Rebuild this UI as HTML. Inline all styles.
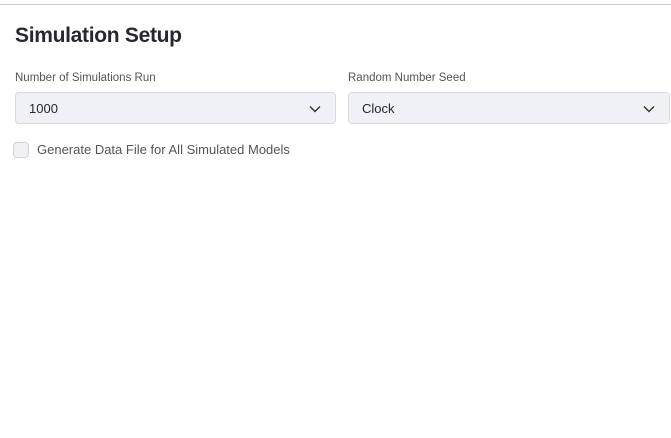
<!DOCTYPE html>
<html><head><style>
body{margin:0;width:671px;height:438px;background:#fff;font-family:"Liberation Sans",sans-serif;position:relative;overflow:hidden}
.top{position:absolute;left:0;top:4px;width:671px;height:1px;background:#cfcbea}
h1{position:absolute;left:15px;top:24px;margin:0;font-size:21px;font-weight:bold;color:#262730;letter-spacing:-0.3px}
.lbl{position:absolute;top:72px;font-size:11.5px;color:#555}
.sel{position:absolute;top:92px;height:32px;border:1px solid #dadbe0;border-radius:4px;background:#f0f1f4;box-sizing:border-box}
.sel span{position:absolute;left:13px;top:8px;font-size:13px;color:#262730}
.sel svg{position:absolute;right:14px;top:12px}
.cb{position:absolute;left:13px;top:142px;width:16px;height:16px;border:1px solid #d2d3d8;border-radius:4px;background:#f0f1f4;box-sizing:border-box}
.cbl{position:absolute;left:37px;top:142px;font-size:13px;color:#555}
</style></head><body>
<div class="top"></div>
<h1>Simulation Setup</h1>
<div class="lbl" style="left:15px">Number of Simulations Run</div>
<div class="lbl" style="left:348px">Random Number Seed</div>
<div class="sel" style="left:15px;width:321px"><span>1000</span><svg width="12" height="8" viewBox="0 0 12 8"><path d="M1 1.5L6 6.5L11 1.5" fill="none" stroke="#333" stroke-width="1.4"/></svg></div>
<div class="sel" style="left:348px;width:322px"><span>Clock</span><svg width="12" height="8" viewBox="0 0 12 8"><path d="M1 1.5L6 6.5L11 1.5" fill="none" stroke="#333" stroke-width="1.4"/></svg></div>
<div class="cb"></div>
<div class="cbl">Generate Data File for All Simulated Models</div>
</body></html>
